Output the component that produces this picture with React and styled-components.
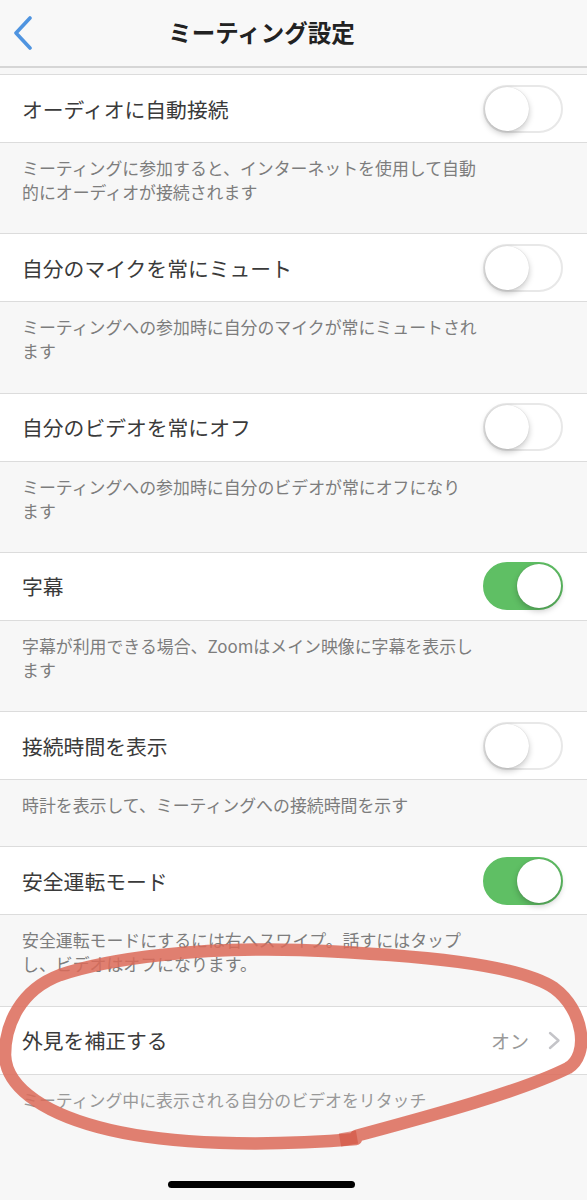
import React from 'react';
import styled, { createGlobalStyle } from 'styled-components';

const GlobalStyle = createGlobalStyle`
  html, body {
    margin: 0;
    padding: 0;
    background: #f7f7f7;
  }
  body {
    font-family: "Noto Sans CJK JP", "Noto Sans", sans-serif;
  }
`;

const Page = styled.div`
  position: relative;
  width: 587px;
  min-height: 1200px;
  display: flex;
  flex-direction: column;
  background: #f7f7f7;
  overflow: hidden;
`;

const Header = styled.header`
  height: 66px;
  display: flex;
  align-items: center;
  justify-content: center;
  position: relative;
  padding-right: 64px;
  background: #f8f8f8;
  border-bottom: 2px solid #d6d6d6;
`;

const BackButton = styled.button`
  position: absolute;
  left: 10px;
  top: 15px;
  width: 26px;
  height: 36px;
  padding: 0;
  border: 0;
  background: none;
  display: flex;
  align-items: center;
  justify-content: center;
`;

const Title = styled.h1`
  margin: 0 0 2px;
  font-size: 23.5px;
  font-weight: 700;
  color: #222;
`;

const List = styled.div`
  margin-top: 6px;
  display: flex;
  flex-direction: column;
`;

const Row = styled.div`
  height: 69px;
  box-sizing: border-box;
  display: flex;
  align-items: center;
  justify-content: space-between;
  padding: 0 24px 0 22px;
  background: #fff;
  border-top: 1px solid #dcdcdc;
  border-bottom: 1px solid #dcdcdc;
`;

const Label = styled.span`
  font-size: 20.8px;
  color: #3a3a3a;
`;

const Description = styled.p`
  margin: 0;
  padding: 13px 22px 29.3px;
  font-size: 16.9px;
  line-height: 24px;
  color: ${p => (p.$muted ? '#999' : '#7d7d7d')};
  white-space: pre-line;
`;

const Track = styled.div`
  width: 80px;
  height: 48px;
  box-sizing: border-box;
  border-radius: 24px;
  position: relative;
  background: ${p => (p.$on ? '#5fbf64' : '#fff')};
  border: 2px solid ${p => (p.$on ? '#5fbf64' : '#e8e8e8')};
`;

const Knob = styled.div`
  position: absolute;
  top: 0;
  left: ${p => (p.$on ? '32px' : '0')};
  width: 44px;
  height: 44px;
  border-radius: 50%;
  background: #fff;
  box-shadow: 0 3px 6px rgba(0, 0, 0, 0.22), 0 0 1px rgba(0, 0, 0, 0.2);
`;

const Value = styled.div`
  display: flex;
  align-items: center;
  gap: 19px;
  font-size: 19px;
  color: #999;
  margin-right: 2px;
`;

const HomeBar = styled.div`
  margin: auto 0 12px 168px;
  width: 187px;
  height: 7px;
  border-radius: 4px;
  background: #000;
`;

const Annotation = styled.svg`
  position: absolute;
  left: 0;
  top: 0;
  pointer-events: none;
`;

const Toggle = ({ on }) => (
  <Track $on={on}>
    <Knob $on={on} />
  </Track>
);

const settings = [
  {
    label: 'オーディオに自動接続',
    on: false,
    desc: 'ミーティングに参加すると、インターネットを使用して自動\n的にオーディオが接続されます',
  },
  {
    label: '自分のマイクを常にミュート',
    on: false,
    desc: 'ミーティングへの参加時に自分のマイクが常にミュートされ\nます',
  },
  {
    label: '自分のビデオを常にオフ',
    on: false,
    desc: 'ミーティングへの参加時に自分のビデオが常にオフになり\nます',
  },
  {
    label: '字幕',
    on: true,
    desc: '字幕が利用できる場合、Zoomはメイン映像に字幕を表示し\nます',
  },
  {
    label: '接続時間を表示',
    on: false,
    desc: '時計を表示して、ミーティングへの接続時間を示す',
  },
  {
    label: '安全運転モード',
    on: true,
    desc: '安全運転モードにするには右へスワイプ。話すにはタップ\nし、ビデオはオフになります。',
  },
];

const App = () => {
  return (
    <Page>
      <GlobalStyle />
      <Header>
        <BackButton aria-label="戻る">
          <svg width="20" height="34" viewBox="0 0 20 34">
            <path
              d="M17 2 L3 17 L17 32"
              fill="none"
              stroke="#4f94e0"
              strokeWidth="3.6"
              strokeLinecap="round"
              strokeLinejoin="round"
            />
          </svg>
        </BackButton>
        <Title>ミーティング設定</Title>
      </Header>

      <List>
        {settings.map(s => (
          <React.Fragment key={s.label}>
            <Row>
              <Label>{s.label}</Label>
              <Toggle on={s.on} />
            </Row>
            <Description>{s.desc}</Description>
          </React.Fragment>
        ))}
        <Row>
          <Label>外見を補正する</Label>
          <Value>
            オン
            <svg width="13" height="19" viewBox="0 0 13 19">
              <path
                d="M2 2 L10.5 9.5 L2 17"
                fill="none"
                stroke="#c4c4c8"
                strokeWidth="2.4"
                strokeLinecap="round"
                strokeLinejoin="round"
              />
            </svg>
          </Value>
        </Row>
        <Description $muted>ミーティング中に表示される自分のビデオをリタッチ</Description>
      </List>

      <HomeBar />

      <Annotation width="587" height="1200" viewBox="0 0 587 1200">
        <path
          d="M356 1136 C430 1116, 520 1092, 568 1068 C590 1055, 584 1010, 554 988 C518 964, 420 955, 300 950 C200 947, 110 958, 60 975 C20 990, 5 1025, 5 1055 C6 1090, 50 1116, 110 1130 C170 1144, 260 1147, 356 1139"
          fill="none"
          stroke="#dc6a58"
          strokeOpacity="0.85"
          strokeWidth="12.5"
          strokeLinecap="round"
          strokeLinejoin="round"
        />
        <path
          d="M340 1140 L357 1137"
          fill="none"
          stroke="#d0503e"
          strokeOpacity="0.6"
          strokeWidth="13"
        />
      </Annotation>
    </Page>
  );
};

export default App;
